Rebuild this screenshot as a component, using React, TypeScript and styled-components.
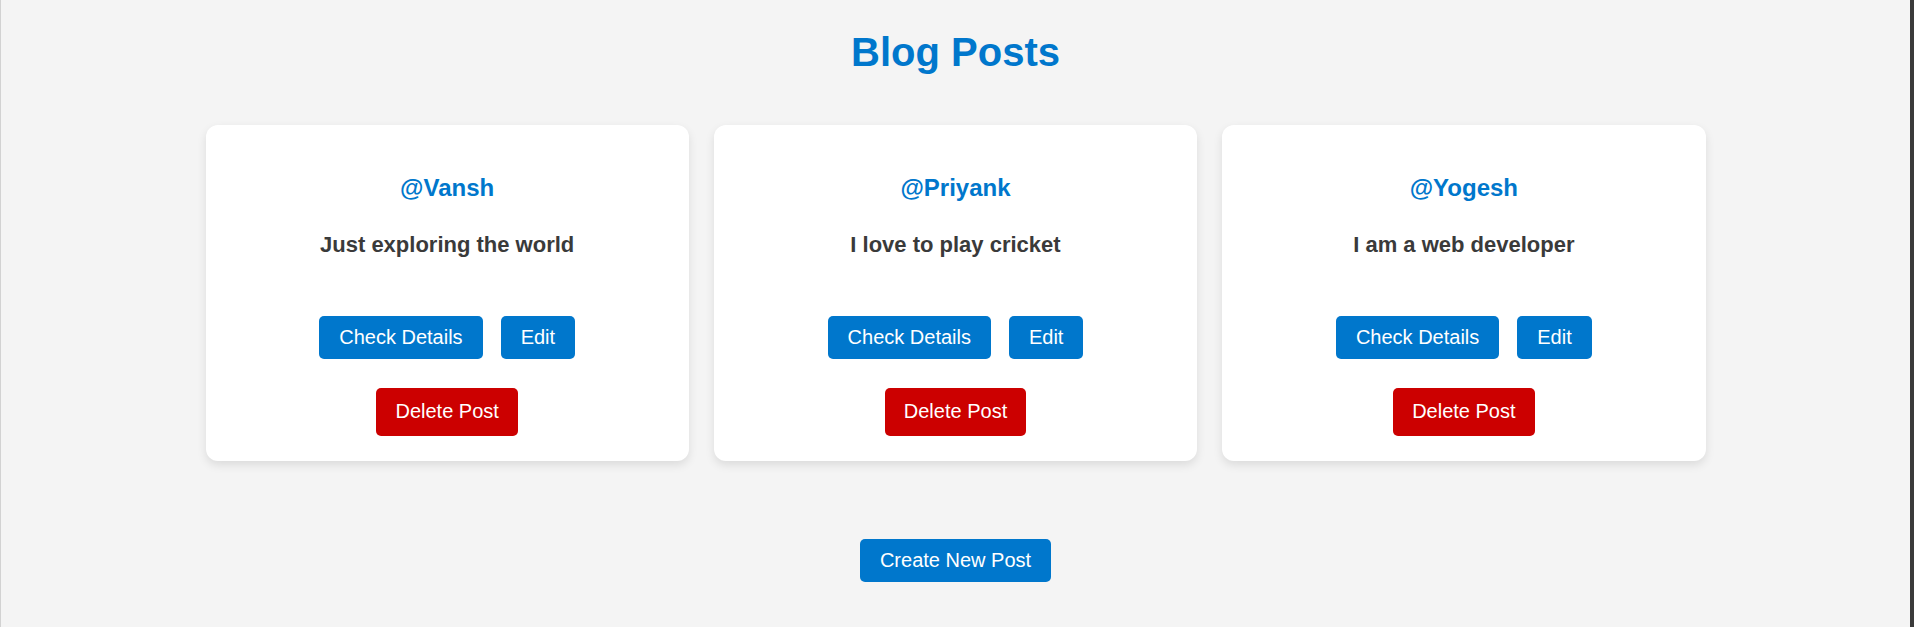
import React from "react";
import styled, { createGlobalStyle } from "styled-components";

const GlobalStyle = createGlobalStyle`
  html, body {
    margin: 0;
    padding: 0;
    background: #f4f4f4;
  }
  body {
    font-family: "Liberation Sans", Arial, sans-serif;
  }
  * { box-sizing: border-box; }
`;

const Frame = styled.div`
  min-height: 100vh;
  background: #f4f4f4;
  border-left: 1px solid #d2d2d2;
  border-right: 4px solid #3a3a3a;
  display: flex;
  flex-direction: column;
  align-items: center;
  padding-top: 29px;
`;

const Title = styled.h1`
  margin: 0;
  font-size: 40px;
  font-weight: 700;
  color: #0077cc;
  line-height: 46px;
`;

const Grid = styled.div`
  display: grid;
  grid-template-columns: repeat(3, 1fr);
  column-gap: 25px;
  width: 1500px;
  margin-top: 50px;
`;

const Card = styled.div`
  background: #ffffff;
  border-radius: 12px;
  box-shadow: 0 4px 10px rgba(0, 0, 0, 0.1);
  height: 336px;
  padding-top: 49px;
  display: flex;
  flex-direction: column;
  align-items: center;
`;

const Username = styled.h2`
  margin: 0;
  font-size: 24px;
  line-height: 27px;
  font-weight: 700;
  color: #0077cc;
`;

const Description = styled.p`
  margin: 31px 0 0;
  font-size: 22px;
  line-height: 25px;
  font-weight: 700;
  color: #3a3a3a;
`;

const ButtonRow = styled.div<{ $top: number }>`
  display: flex;
  gap: 18px;
  justify-content: center;
  margin-top: ${(p) => p.$top}px;
`;

const Button = styled.button<{ $danger?: boolean }>`
  font-family: "Liberation Sans", Arial, sans-serif;
  font-size: 20px;
  line-height: 23px;
  color: #ffffff;
  background: ${(p) => (p.$danger ? "#cc0000" : "#0077cc")};
  border: none;
  border-radius: 5px;
  padding: ${(p) => (p.$danger ? "12px 19px 13px" : "10px 20px")};
  cursor: pointer;
`;

const Footer = styled.div`
  margin-top: 78px;
`;

const posts = [
  { user: "Vansh", text: "Just exploring the world" },
  { user: "Priyank", text: "I love to play cricket" },
  { user: "Yogesh", text: "I am a web developer" },
];

export default function App() {
  return (
    <>
      <GlobalStyle />
      <Frame>
        <Title>Blog Posts</Title>
        <Grid>
          {posts.map((p) => (
            <Card key={p.user}>
              <Username>@{p.user}</Username>
              <Description>{p.text}</Description>
              <ButtonRow $top={59}>
                <Button>Check Details</Button>
                <Button>Edit</Button>
              </ButtonRow>
              <ButtonRow $top={29}>
                <Button $danger>Delete Post</Button>
              </ButtonRow>
            </Card>
          ))}
        </Grid>
        <Footer>
          <Button>Create New Post</Button>
        </Footer>
      </Frame>
    </>
  );
}
